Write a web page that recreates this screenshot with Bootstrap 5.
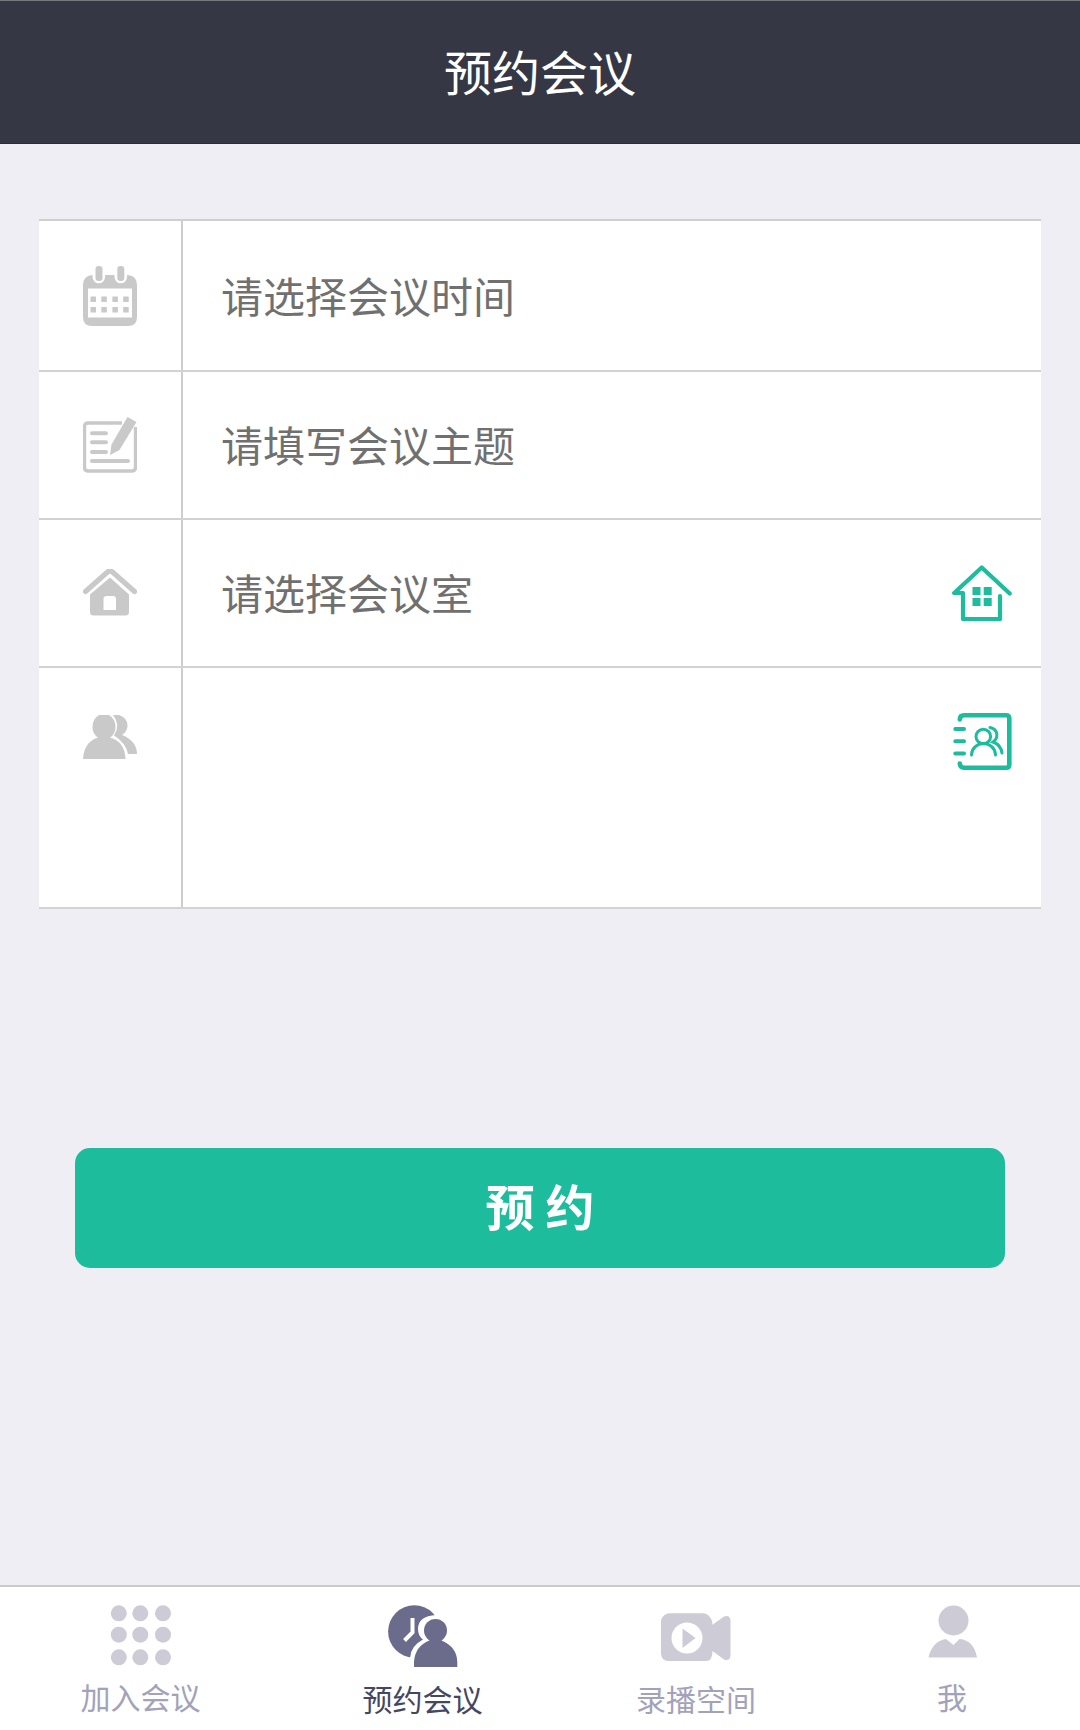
<!DOCTYPE html>
<html lang="zh-CN">
<head>
<meta charset="utf-8">
<meta name="viewport" content="width=device-width, initial-scale=1">
<title>预约会议</title>
<link rel="stylesheet" href="https://cdn.jsdelivr.net/npm/bootstrap@5.3.0/dist/css/bootstrap.min.css">
<style>
  body { background: #efeef4; font-family: "Noto Sans CJK SC", sans-serif; height: 1730px; overflow: hidden; }
  svg { display: block; flex: none; }
  .topbar { height: 144px; background: #353744; border-top: 1px solid #777a7d; border-bottom: 1px solid #2b2c3a; padding-bottom: 4px; }
  .topbar h1 { font-size: 48px; line-height: 1; font-weight: 400; color: #fff; }
  .booking { margin: 75px 39px 0; background: #fff; border-top: 2px solid #cfcfcf; }
  .field { height: 148px; border-bottom: 2px solid #d2d2d2; }
  .field-first { height: 151px; }
  .field-people { height: 241px; }
  .field-icon { width: 144px; border-right: 2px solid #cdcdcd; padding-left: 44px; flex: none; }
  .pad-a { padding-top: 45px; } .pad-b { padding-top: 49px; } .pad-c { padding-top: 47px; }
  .field .form-control { font-size: 42px; line-height: 1.4; color: #707070; padding: 0 0 3px 38px; background: none; box-shadow: none; height: 100%; }
  .field .form-control::placeholder { color: #707070; opacity: 1; }
  .pick { color: #1cbc9c; padding: 45px 29px 0 0; flex: none; }
  .grey { color: #c9c9c9; }
  .btn-book { margin: 239px 75px 0; height: 120px; border-radius: 15px; background: #1cbc9c; color: #fff; font-size: 49px; font-weight: 700; line-height: 1; padding: 0 0 7px; }
  .btn-book:hover { background: #1cbc9c; color: #fff; }
  .tabbar { height: 145px; border-top: 2px solid #cbcbcb; background: #fff; padding-right: 4px; }
  .tab { color: #a3a2ba; font-size: 30px; line-height: 30px; text-decoration: none; padding-top: 18px; }
  .tab.active { color: #454663; }
  .tab svg { height: 64px; color: #cccbd6; }
  .tab.active svg { color: #6b6b8b; }
  .tab span { margin-top: 12px; }
  .tab.low span { margin-top: 14px; }
  .w-a { width: 281px; } .w-b { width: 283px; } .w-c { width: 264px; } .w-d { width: 248px; }
</style>
<script src="https://cdn.jsdelivr.net/npm/bootstrap@5.3.0/dist/js/bootstrap.bundle.min.js"></script>
</head>
<body class="d-flex flex-column">
<header class="topbar d-flex align-items-center justify-content-center">
  <h1 class="m-0">预约会议</h1>
</header>
<main class="d-flex flex-column flex-grow-1">
  <form class="booking">
    <div class="field field-first d-flex">
      <div class="field-icon grey pad-a">
        <svg width="54" height="60" viewBox="0 0 54 60" fill="currentColor">
          <path fill-rule="evenodd" d="M9 9h36q9 1 9 10v32q0 9-9 9H9q-9 0-9-9V19Q0 10 9 9zM5 22.500v29h44v-29z"/>
          <path d="M9.500 8v3a6.300 6.300 0 0 0 12.600 0V8zM31.500 8v3a6.300 6.300 0 0 0 12.600 0V8z" fill="#fff"/>
          <rect x="12.500" y="0" width="7" height="15" rx="3.200"/><rect x="34.300" y="0" width="7" height="15" rx="3.200"/>
          <path d="M7.500 30.500h5.500v5.500h-5.500zM18.300 30.500h5.500v5.500h-5.500zM29.400 30.500h5.500v5.500h-5.500zM40.200 30.500h5.500v5.500h-5.500zM7.500 41h5.500v5.500h-5.500zM18.300 41h5.500v5.500h-5.500zM29.400 41h5.500v5.500h-5.500zM40.200 41h5.500v5.500h-5.500z"/>
        </svg>
      </div>
      <input class="form-control border-0 rounded-0" type="text" placeholder="请选择会议时间">
    </div>
    <div class="field d-flex">
      <div class="field-icon grey pad-a">
        <svg width="54" height="56" viewBox="0 0 54 56" fill="none" stroke="currentColor">
          <path d="M39 6H5Q1.500 6 1.500 9.500v41Q1.500 54 5 54h44q3.500 0 3.500-3.500V10" stroke-width="3.400"/>
          <path d="M9 16.300h14M9 25.300h14M9 35h14M9 44h36" stroke-width="4" stroke-linecap="round"/>
          <path d="M44.500 0l9 5L36.500 33 27 38l1.500-10.500z" fill="currentColor" stroke="none"/>
        </svg>
      </div>
      <input class="form-control border-0 rounded-0" type="text" placeholder="请填写会议主题">
    </div>
    <div class="field d-flex">
      <div class="field-icon grey pad-b">
        <svg width="54" height="47" viewBox="0 0 54 47">
          <path d="M2.500 22.500L24.500 3q2.500-2 5 0l22 19.500" fill="none" stroke="currentColor" stroke-width="5.200" stroke-linecap="round"/>
          <path d="M7 25.500L27 8.500l19 17v17.500q0 3.500-3.500 3.500h-32Q7 46.500 7 43zM20.500 30v11h12.500V30q0-3-3-3h-6.500q-3 0-3 3z" fill="currentColor" fill-rule="evenodd"/>
        </svg>
      </div>
      <input class="form-control border-0 rounded-0" type="text" placeholder="请选择会议室">
      <div class="pick">
        <svg width="60" height="56" viewBox="0 0 60 56" fill="none" stroke="currentColor" stroke-width="4.200" stroke-linecap="round" stroke-linejoin="round">
          <path d="M57.700 28.500L29.700 2.500 2.200 28h8.800v26h37V31"/>
          <path d="M20.500 22h8v8h-8zM31.700 22h8v8h-8zM20.500 33h8v8h-8zM31.700 33h8v8h-8z" fill="currentColor" stroke="none"/>
        </svg>
      </div>
    </div>
    <div class="field field-people d-flex">
      <div class="field-icon grey pad-c">
        <svg width="54" height="44" viewBox="0 0 54 44" fill="currentColor">
          <path d="M30 0h6q8.500 3 8.500 10.500 0 6-5.500 9.500Q54 26 54 39H45q-2-11-14-18.500Q38 10 30 0z"/>
          <path d="M16 0h10q6.500 4 6.500 12 0 7-5.500 10.500Q42 27 42.500 44H0Q1 27 15 22.500 9.500 19 9.500 12 9.500 4 16 0z"/>
        </svg>
      </div>
      <input class="form-control border-0 rounded-0" type="text" aria-label="参会人">
      <div class="pick">
        <svg width="60" height="57" viewBox="0 0 60 57" fill="none" stroke="currentColor" stroke-width="4.600" stroke-linecap="round">
          <path d="M7.800 6.500Q8 2.300 12 2.300H54q3.300 0 3.300 3.200v46q0 3.200-3.300 3.200H12Q8 54.700 7.800 50.500"/>
          <path d="M3.300 16h8.700M3.300 28.300h8.700M3.300 40.500h8.700" stroke-width="4"/>
          <g stroke-width="3"><circle cx="31.300" cy="23.500" r="7.300"/><path d="M19.500 42a12 11.500 0 0 1 24 0M38 14.500c8 1.500 9 10.500 3 14.500q8 3 9 11"/></g>
        </svg>
      </div>
    </div>
  </form>
  <button class="btn btn-book border-0" type="button">预 约</button>
</main>
<nav class="tabbar d-flex">
  <a class="tab w-a d-flex flex-column align-items-center" href="#">
    <svg width="61" viewBox="0 0 61 64" fill="currentColor">
      <circle cx="8.800" cy="8.300" r="8"/><circle cx="30.300" cy="8.300" r="8"/><circle cx="53" cy="8.300" r="8"/>
      <circle cx="8.800" cy="29.700" r="8"/><circle cx="30.300" cy="29.700" r="8"/><circle cx="53" cy="29.700" r="8"/>
      <circle cx="8.800" cy="52.300" r="8"/><circle cx="30.300" cy="52.300" r="8"/><circle cx="53" cy="52.300" r="8"/>
    </svg>
    <span>加入会议</span>
  </a>
  <a class="tab active low w-b d-flex flex-column align-items-center" href="#">
    <svg width="70" viewBox="0 0 70 64" fill="currentColor">
      <circle cx="26.300" cy="26.500" r="26.200"/>
      <path d="M24.500 13v14.500L16.500 35.500" fill="none" stroke="#fff" stroke-width="4"/>
      <path d="M22 62V53q.5-12 13-18.500Q30 31 30 24q0-13 18-14 12 4 17 18L60 60z" fill="#fff"/>
      <circle cx="47.500" cy="25.500" r="11.500"/>
      <path d="M26 62V57q1-16 15.500-21.500V32h12v3.500Q69 42 69.300 57v5z"/>
    </svg>
    <span>预约会议</span>
  </a>
  <a class="tab low w-c d-flex flex-column align-items-center" href="#">
    <svg width="70" viewBox="0 0 70 64" fill="currentColor">
      <path d="M8 8.300h34q4 0 6.500 3.500 3 3 3 8L63 11.500q6-2 6.500 4v35q-.5 6-6.500 4L51.500 46q0 10-6.500 10H7q-6 0-7-7V15.500Q2 9 8 8.300z"/>
      <circle cx="26" cy="33" r="15.500" fill="#fff"/>
      <path d="M21.500 23.500L34.500 33 21.500 43z"/>
    </svg>
    <span>录播空间</span>
  </a>
  <a class="tab w-d d-flex flex-column align-items-center" href="#">
    <svg width="50" viewBox="0 0 50 64" fill="currentColor">
      <circle cx="26.500" cy="15.500" r="15"/>
      <path d="M1.500 52.500Q5 36.500 19 34l7.500 6 6-6Q47 35.500 50 52.500z"/>
    </svg>
    <span>我</span>
  </a>
</nav>
</body>
</html>
